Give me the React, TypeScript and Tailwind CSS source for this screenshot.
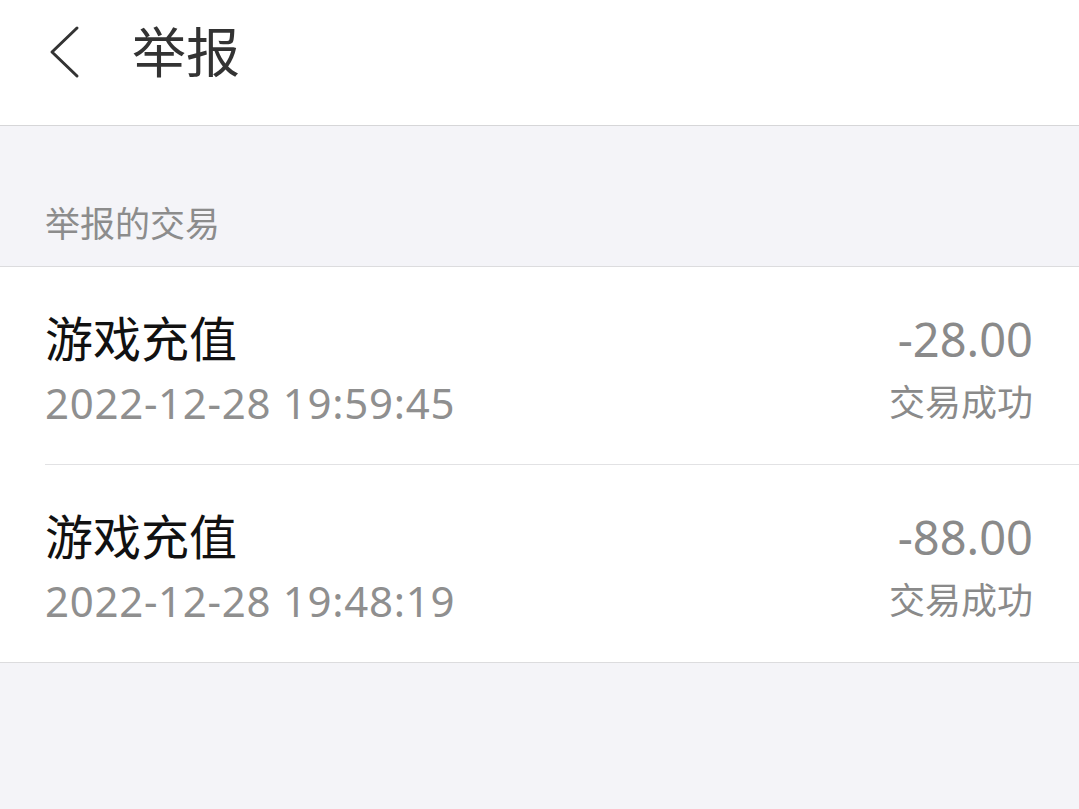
export default function App() {
  const rows = [
    { title: "游戏充值", time: "2022-12-28 19:59:45", amount: "-28.00", status: "交易成功" },
    { title: "游戏充值", time: "2022-12-28 19:48:19", amount: "-88.00", status: "交易成功" },
  ];
  const font = { fontFamily: '"Noto Sans", "Noto Sans CJK SC", sans-serif' };
  return (
    <div className="w-[1079px] h-[809px] bg-[#f4f4f8] flex flex-col" style={font}>
      <div className="h-[126px] bg-white border-b border-[#d6d6d8] flex items-start">
        <div className="h-[104px] flex items-center">
          <svg className="ml-[46px]" width="36" height="54" viewBox="0 0 36 54">
            <path d="M31 3 L6 27 L31 51" fill="none" stroke="#333" strokeWidth="3" strokeLinecap="round" strokeLinejoin="round" />
          </svg>
          <span className="ml-[50px] text-[54px] leading-[64px] text-[#333]">举报</span>
        </div>
      </div>
      <div className="pt-[76px] pb-[20px] px-[45px] text-[35px] leading-[44px] text-[#8c8c8c]">举报的交易</div>
      <div className="bg-white border-t border-b border-[#dcdcde]">
        {rows.map((r, i) => (
          <div key={i} className={`ml-[45px] pr-[46px] pt-[40px] pb-[29px] flex justify-between ${i > 0 ? "border-t border-[#e2e2e4]" : ""}`}>
            <div className="flex flex-col">
              <span className="text-[48px] leading-[64px] text-[#111]">{r.title}</span>
              <span className="text-[42px] leading-[64px] tracking-[0.7px] text-[#8f8f8f]">{r.time}</span>
            </div>
            <div className="flex flex-col items-end">
              <span className="text-[47px] leading-[64px] text-[#8a8a8a]">{r.amount}</span>
              <span className="text-[36px] leading-[64px] text-[#8a8a8a]">{r.status}</span>
            </div>
          </div>
        ))}
      </div>
    </div>
  );
}
